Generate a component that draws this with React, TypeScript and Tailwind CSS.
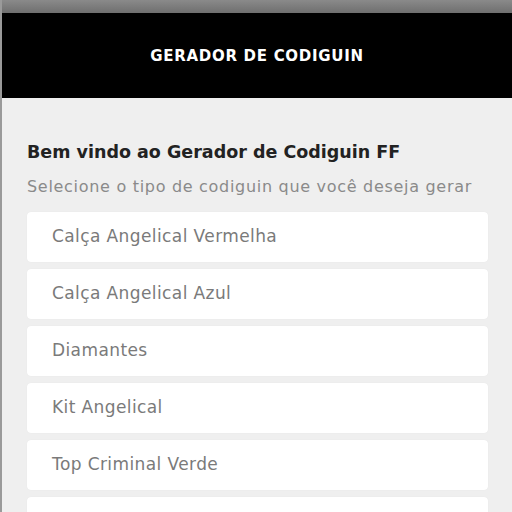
const items = [
  'Calça Angelical Vermelha',
  'Calça Angelical Azul',
  'Diamantes',
  'Kit Angelical',
  'Top Criminal Verde',
  'M1014 Dragão Verde',
];

export default function App() {
  return (
    <div className="w-[512px] h-[512px] overflow-hidden bg-[#efefef] border-l-2 border-[#9a9a9a] font-['DejaVu_Sans',sans-serif]">
      <div className="h-[13px] bg-gradient-to-b from-[#8a8a8a] to-[#6f6f6f]" />
      <header className="h-[85px] bg-black flex items-center justify-center pt-[2px]">
        <h1 className="text-white font-bold text-[15px] tracking-[0.7px]">GERADOR DE CODIGUIN</h1>
      </header>
      <main className="pl-[25px] pr-[24px] pt-[42px]">
        <h2 className="text-[17.5px] font-bold text-[#222] leading-[24px]">
          Bem vindo ao Gerador de Codiguin FF
        </h2>
        <p className="mt-[13px] text-[16px] text-[#8a8a8a] leading-[20px] tracking-[0.7px] whitespace-nowrap">
          Selecione o tipo de codiguin que você deseja gerar
        </p>
        <ul className="mt-[15px] flex flex-col gap-[7px]">
          {items.map((item) => (
            <li
              key={item}
              className="h-[50px] shrink-0 bg-white rounded-[4px] flex items-center pl-[25px] text-[17px] tracking-[0.4px] text-[#7a7a7a] shadow-[0_0_1px_rgba(0,0,0,0.08)]"
            >
              {item}
            </li>
          ))}
        </ul>
      </main>
    </div>
  );
}
